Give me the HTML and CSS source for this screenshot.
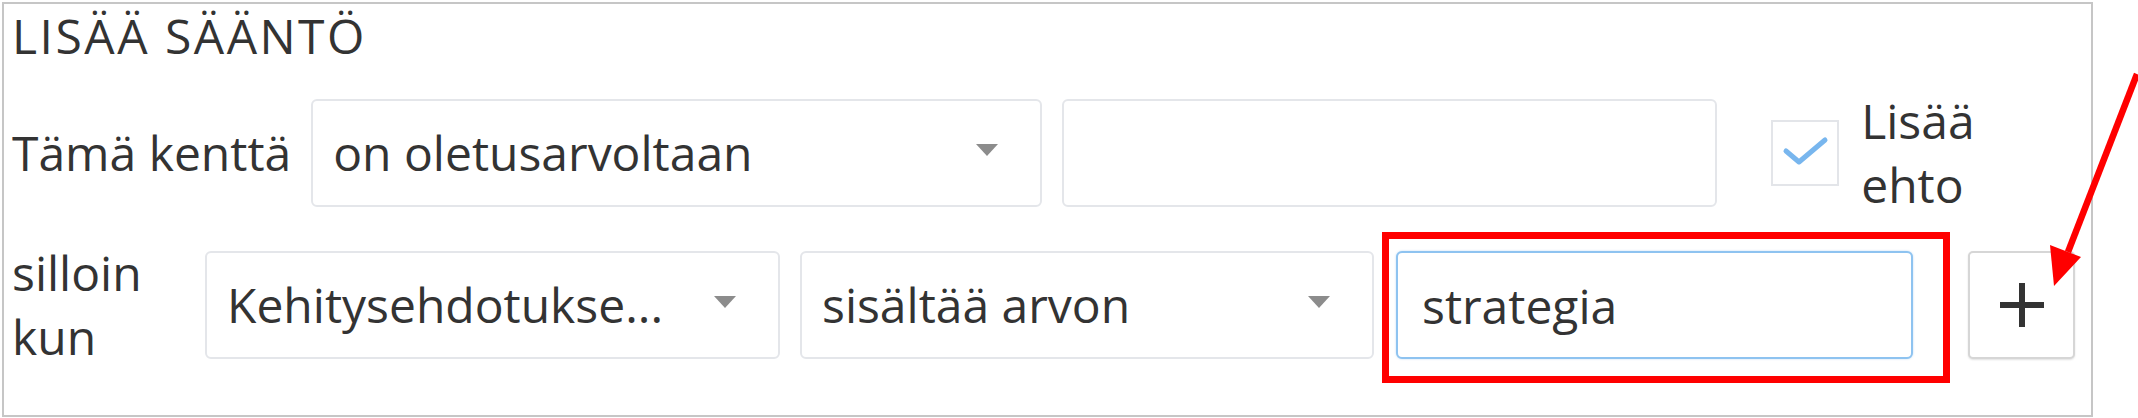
FILE: index.html
```html
<!DOCTYPE html>
<html>
<head>
    <title>Lisää sääntö</title>
    <link rel="stylesheet" href="styles.css">
</head>
<body>
    <div class="rule-panel">
        <div class="rule-title">LISÄÄ SÄÄNTÖ</div>
        <div class="rule-row first">
            <div class="row-label nowrap" style="flex-basis: 276px;">Tämä kenttä</div>
            <div class="field select" style="width: 731px;">
                <span>on oletusarvoltaan</span>
                <span class="caret"></span>
            </div>
            <input class="field" type="text" value="" style="width: 655px;">
            <div class="check-box">
                <svg width="64" height="62" viewBox="0 0 64 62">
                    <polyline points="13,29 26,40 52,18" fill="none" stroke="#78b6ee" stroke-width="5" stroke-linecap="round" stroke-linejoin="round"/>
                </svg>
            </div>
            <div class="check-label">Lisää ehto</div>
        </div>
        <div class="rule-row second">
            <div class="row-label" style="flex-basis: 173px;">silloin kun</div>
            <div class="field select" style="width: 575px;">
                <span>Kehitysehdotukse...</span>
                <span class="caret"></span>
            </div>
            <div class="field select" style="width: 574px;">
                <span>sisältää arvon</span>
                <span class="caret"></span>
            </div>
            <div class="highlight">
                <input class="field focused" type="text" value="strategia" style="width: 517px;">
            </div>
            <button class="add-button">
                <svg width="50" height="50" viewBox="0 0 50 50">
                    <path d="M25 3 V47 M3 25 H47" stroke="#333" stroke-width="6"/>
                </svg>
            </button>
        </div>
    </div>
    <!-- annotation arrow pointing at the add button -->
    <svg class="note-arrow" width="108" height="240" viewBox="0 0 108 240">
        <line x1="107" y1="14" x2="38" y2="192" stroke="#ff0000" stroke-width="6.5"/>
        <polygon points="24,226 51,197 20,185" fill="#ff0000"/>
    </svg>
</body>
</html>
```

FILE: styles.css
```css
body {
    margin: 0;
    width: 2138px;
    height: 418px;
    overflow: hidden;
    position: relative;
    background-color: #ffffff;
    font-family: "Open Sans", "Noto Sans", sans-serif;
    font-size: 48px;
    line-height: 64px;
    color: #333333;
}
.rule-panel {
    margin: 2px 0 0 2px;
    width: 2091px;
    box-sizing: border-box;
    border: 2px solid #c6c6c6;
    padding: 0 0 46px 8px;
}
.rule-title {
    letter-spacing: 2.5px;
}
.rule-row {
    display: flex;
    align-items: center;
    gap: 20px;
}
.rule-row.first {
    margin-top: 21px;
}
.rule-row.second {
    margin-top: 24px;
}
.row-label {
    flex-grow: 0;
    flex-shrink: 0;
}
.nowrap {
    white-space: nowrap;
}
.field {
    height: 108px;
    box-sizing: border-box;
    border: 2px solid #e4e6ea;
    border-radius: 6px;
    background-color: #fff;
    padding: 0 20px;
    font: inherit;
    color: inherit;
    outline: none;
    flex-shrink: 0;
}
.select {
    display: flex;
    align-items: center;
    padding-right: 42px;
}
.caret {
    margin-left: auto;
    margin-top: -6px;
    width: 0;
    height: 0;
    border-left: 11px solid transparent;
    border-right: 11px solid transparent;
    border-top: 12px solid #8c8c8c;
}
.field.focused {
    border-color: #8ec3f0;
    box-shadow: 0 0 2px rgba(120, 180, 235, 0.5);
    padding-left: 24px;
}
.check-box {
    margin-left: 34px;
    width: 68px;
    height: 66px;
    box-sizing: border-box;
    border: 2px solid #e3e5e9;
    display: flex;
    align-items: center;
    justify-content: center;
    flex-shrink: 0;
}
.check-label {
    margin-left: 2px;
    width: 130px;
}
.highlight {
    position: relative;
    margin-left: 2px;
}
.highlight::after {
    content: "";
    position: absolute;
    top: -19px;
    left: -14px;
    right: -37px;
    bottom: -24px;
    border: 7px solid #ff0000;
}
.add-button {
    margin-left: 35px;
    width: 107px;
    height: 108px;
    padding: 0;
    border: 2px solid #d6d6d6;
    border-radius: 5px;
    background-color: #fff;
    box-shadow: 0 1px 2px rgba(0, 0, 0, 0.12);
    display: flex;
    align-items: center;
    justify-content: center;
    cursor: pointer;
}
.note-arrow {
    position: absolute;
    left: 2030px;
    top: 60px;
}
```
